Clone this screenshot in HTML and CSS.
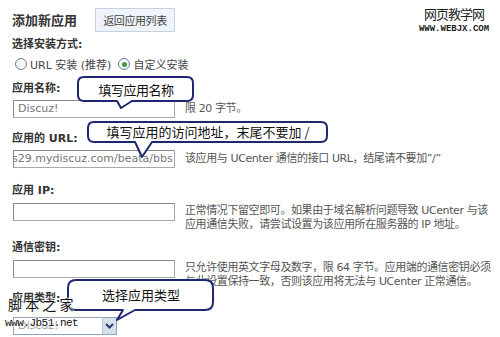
FILE: index.html
```html
<!DOCTYPE html>
<html lang="zh-CN">
<head>
<meta charset="utf-8">
<title>添加新应用</title>
<link rel="stylesheet" href="styles.css">
</head>
<body>
<div class="page">
  <div class="header">
    <h1 class="title">添加新应用</h1>
    <span class="btn">返回应用列表</span>
  </div>
  <div class="label sec-label">选择安装方式:</div>
  <div class="radios">
    <span class="radio-item"><span class="radio"></span>URL 安装 (推荐)</span>
    <span class="radio-item"><span class="radio checked"></span>自定义安装</span>
  </div>

  <div class="field f-name">
    <div class="label">应用名称:</div>
    <div class="row">
      <div class="input">Discuz!</div>
      <div class="desc one">限 20 字节。</div>
    </div>
  </div>

  <div class="field f-url">
    <div class="label">应用的 URL:</div>
    <div class="row">
      <div class="input"><span class="scrolled">s29.mydiscuz.com/beata/bbs</span></div>
      <div class="desc one">该应用与 UCenter 通信的接口 URL，结尾请不要加”/”</div>
    </div>
  </div>

  <div class="field f-ip">
    <div class="label">应用 IP:</div>
    <div class="row">
      <div class="input"></div>
      <div class="desc">正常情况下留空即可。如果由于域名解析问题导致 UCenter 与该<br>应用通信失败，请尝试设置为该应用所在服务器的 IP 地址。</div>
    </div>
  </div>

  <div class="field f-key">
    <div class="label">通信密钥:</div>
    <div class="row">
      <div class="input"></div>
      <div class="desc">只允许使用英文字母及数字，限 64 字节。应用端的通信密钥必须<br>与此设置保持一致，否则该应用将无法与 UCenter 正常通信。</div>
    </div>
  </div>

  <div class="field f-type">
    <div class="label">应用类型:</div>
    <div class="row">
      <div class="select"><span class="select-text">Discuz!</span><span class="select-btn"><svg width="9" height="6" viewBox="0 0 9 6"><path d="M1 1 L4.5 4.5 L8 1" fill="none" stroke="#2b3a6b" stroke-width="2"/></svg></span></div>
    </div>
  </div>
</div>

<div class="callout c1">
  <svg class="bubble" width="118" height="34" viewBox="0 0 118 34"><path d="M7 1 H110 Q116 1 116 7 V19 Q116 25 110 25 H55 L44 32 L40 25 H7 Q1 25 1 19 V7 Q1 1 7 1 Z"/></svg>
  <span class="callout-text">填写应用名称</span>
</div>
<div class="callout c2">
  <svg class="bubble" width="242" height="38" viewBox="0 0 242 38"><path d="M7 1 H234 Q240 1 240 7 V15 Q240 21 234 21 H65 L55 36 L48 21 H7 Q1 21 1 15 V7 Q1 1 7 1 Z"/></svg>
  <span class="callout-text">填写应用的访问地址，末尾不要加 /</span>
</div>
<div class="callout c3">
  <svg class="bubble" width="148" height="43" viewBox="0 0 148 43"><path d="M9 1 H138 Q146 1 146 9 V23 Q146 31 138 31 H68 L50 41 L56 31 H9 Q1 31 1 23 V9 Q1 1 9 1 Z"/></svg>
  <span class="callout-text">选择应用类型</span>
</div>

<div class="wm-top">
  <div class="wm-top-cn">网页教学网</div>
  <div class="wm-top-en">WWW.WEBJX.COM</div>
</div>
<div class="wm-bottom">
  <div class="wm-bottom-cn">脚 本 之 家</div>
  <div class="wm-bottom-en">www.Jb51.net</div>
</div>
</body>
</html>
```

FILE: styles.css
```css
* { box-sizing: border-box; }
html, body {
  margin: 0;
  padding: 0;
  background: #ffffff;
}
body {
  width: 500px;
  height: 337px;
  overflow: hidden;
  position: relative;
  font-family: "DejaVu Sans", "Noto Sans CJK SC", sans-serif;
  font-size: 11px;
  color: #444;
}
.page {
  padding: 8px 0 0 12px;
}
.header {
  display: flex;
  align-items: center;
  gap: 18px;
  height: 24px;
}
.title {
  margin: 0;
  font-size: 13px;
  font-weight: bold;
  color: #333;
  font-family: "Noto Sans CJK SC", sans-serif;
  line-height: 16px;
}
.btn {
  display: inline-flex;
  align-items: center;
  justify-content: center;
  width: 80px;
  height: 24px;
  background: #eef4f9;
  border: 1px solid #c3d3e2;
  color: #444;
  font-size: 11px;
  font-family: "Noto Sans CJK SC", sans-serif;
  letter-spacing: -0.4px;
}
.label {
  font-weight: bold;
  color: #333;
  line-height: 14px;
  height: 14px;
  margin-bottom: 4px;
}
.sec-label {
  margin-top: 6px;
  margin-bottom: 4px;
}
.radios {
  display: flex;
  align-items: center;
  height: 16px;
  padding-left: 3px;
  color: #444;
}
.radio-item {
  display: inline-flex;
  align-items: center;
  margin-right: 7px;
}
.radio {
  width: 12px;
  height: 12px;
  border-radius: 50%;
  border: 1px solid #6f8090;
  background: #f6f7f8;
  margin-right: 3px;
  display: inline-flex;
  align-items: center;
  justify-content: center;
}
.radio.checked::after {
  content: "";
  width: 5px;
  height: 5px;
  border-radius: 50%;
  background: #3c9a45;
}
.field { margin-top: 14px; }
.f-name { margin-top: 10px; }
.f-url { margin-top: 14px; }
.f-ip { margin-top: 16px; }
.f-ip .label { margin-bottom: 5px; }
.f-key { margin-top: 9px; }
.f-key .label { margin-bottom: 5px; }
.f-type { margin-top: 3px; }
.f-type .label { margin-bottom: 11px; }
.row {
  display: flex;
  align-items: flex-start;
  gap: 10px;
}
.input {
  width: 162px;
  height: 18px;
  margin-left: 1px;
  flex: none;
  border: 1px solid #a8a8a8;
  border-top-color: #8a8a8a;
  border-left-color: #8a8a8a;
  background: #fff;
  color: #777;
  line-height: 16px;
  padding: 0 4px;
  white-space: nowrap;
  overflow: hidden;
}
.scrolled {
  display: inline-block;
  margin-left: -6px;
}
.desc {
  color: #555;
  line-height: 14px;
  padding-top: 1px;
  white-space: nowrap;
  letter-spacing: -0.4px;
}
.desc.one { padding-top: 2px; }
.select {
  width: 104px;
  height: 18px;
  margin-left: 1px;
  border: 1px solid #8fa4b8;
  display: flex;
  align-items: stretch;
  background: #fff;
}
.select-text {
  flex: 1;
  color: #999;
  padding-left: 4px;
  line-height: 16px;
}
.select-btn {
  width: 14px;
  background: #d6e0ec;
  border-left: 1px solid #b7c6d8;
  display: flex;
  align-items: center;
  justify-content: center;
}
.callout {
  position: absolute;
}
.bubble {
  position: absolute;
  left: 0;
  top: 0;
}
.bubble path {
  fill: #ffffff;
  stroke: #1f2770;
  stroke-width: 2;
  stroke-linejoin: round;
}
.callout-text {
  position: absolute;
  left: 0;
  font-family: "Noto Sans CJK SC", sans-serif;
  font-size: 13px;
  color: #111;
  white-space: nowrap;
  text-align: center;
}
.c1 { left: 77px; top: 76px; width: 118px; height: 34px; }
.c1 .callout-text { width: 118px; top: 3px; line-height: 22px; letter-spacing: -0.5px; }
.c2 { left: 87px; top: 121px; width: 242px; height: 38px; }
.c2 .callout-text { width: 242px; top: 1px; line-height: 20px; }
.c3 { left: 67px; top: 279px; width: 148px; height: 43px; }
.c3 .callout-text { width: 148px; top: 3px; line-height: 26px; }
.wm-top {
  position: absolute;
  top: 5px;
  left: 416px;
  width: 76px;
  text-align: center;
  color: #222;
}
.wm-top-cn {
  font-family: "Noto Sans CJK SC", sans-serif;
  font-size: 13px;
  line-height: 18px;
  letter-spacing: -1px;
}
.wm-top-en {
  font-family: "Liberation Mono", monospace;
  font-weight: bold;
  font-size: 9px;
  line-height: 10px;
  margin-top: 1px;
}
.wm-bottom {
  position: absolute;
  left: 5px;
  top: 295px;
  color: #111;
  text-shadow: 0 0 2px #fff, 0 0 2px #fff, 0 0 3px #fff;
}
.wm-bottom-cn {
  font-family: "Noto Sans CJK SC", serif;
  font-size: 14px;
  line-height: 18px;
  padding-left: 3px;
}
.wm-bottom-en {
  font-family: "Liberation Mono", monospace;
  font-size: 11px;
  line-height: 14px;
  letter-spacing: -0.5px;
  margin-top: 3px;
}
```
